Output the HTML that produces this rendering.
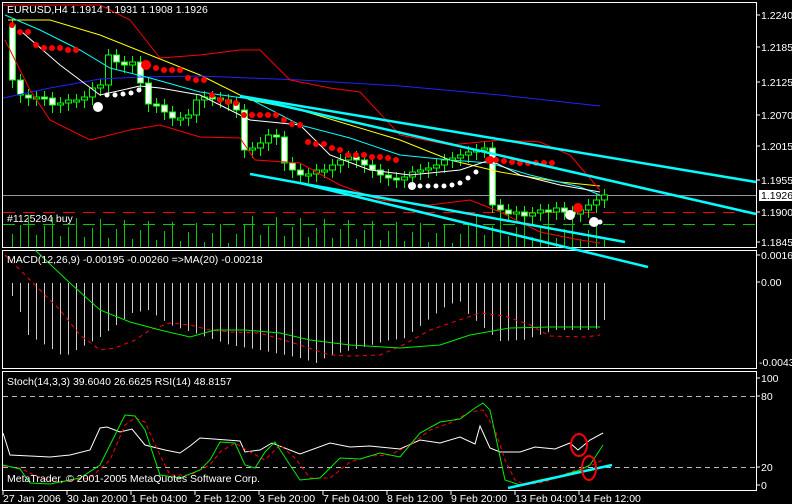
<!DOCTYPE html>
<html><head><meta charset="utf-8"><style>
html,body{margin:0;padding:0;background:#000;width:792px;height:504px;overflow:hidden}
svg{display:block}
text{font-family:"Liberation Sans",sans-serif;font-size:10.5px;fill:#fff}
</style></head><body>
<svg id="s" width="792" height="504" viewBox="0 0 792 504" xmlns="http://www.w3.org/2000/svg">
<rect width="792" height="504" fill="#000"/>
<g fill="none" stroke="#fff" stroke-width="1">
<rect x="2.5" y="2.5" width="754" height="245"/>
<rect x="2.5" y="250.5" width="754" height="118"/>
<rect x="2.5" y="371.5" width="754" height="119"/>
</g>
<g>
<text x="761" y="19">1.2240</text>
<text x="761" y="51">1.2185</text>
<text x="761" y="86">1.2125</text>
<text x="761" y="119">1.2070</text>
<text x="761" y="150">1.2015</text>
<text x="761" y="184">1.1955</text>
<rect x="759" y="190" width="33" height="11" fill="#fff"/>
<text x="761" y="199" style="fill:#000">1.1926</text>
<text x="761" y="216">1.1900</text>
<text x="761" y="246">1.1845</text>
<text x="761" y="259">0.00167</text>
<text x="761" y="286">0.00</text>
<text x="759" y="366">-0.0043</text>
<text x="761" y="382">100</text>
<text x="761" y="400">80</text>
<text x="761" y="471">20</text>
<text x="761" y="489">0</text>
</g>
<g stroke="#fff"><path d="M757 15h3M757 47h3M757 82h3M757 115h3M757 146h3M757 180h3M757 212h3M757 242h3M757 255h3M757 282h3M757 378h3M757 396h3M757 467h3M757 485h3"/></g>
<line x1="3" y1="195.5" x2="756" y2="195.5" stroke="#8c96a0"/>
<line x1="3" y1="212.5" x2="756" y2="212.5" stroke="#f00" stroke-dasharray="12,8"/>
<line x1="3" y1="224.5" x2="756" y2="224.5" stroke="#0c0" stroke-dasharray="12,8"/>
<text x="7" y="222">#1125294 buy</text>
<g id="vol" stroke="#0c0"></g>
<g id="candles"></g>
<g fill="none" stroke-width="1">
<polyline stroke="#ff0" points="8,20 50,20 100,35 150,55 200,75 250,100 300,110 350,125 400,140 450,160 500,172 560,182 600,186"/>
<polyline stroke="#22f" points="3,98 50,88 100,79 140,77 200,76 300,80 400,86 500,95 600,106"/>
<polyline stroke="#0ff" points="5,15 40,30 80,50 110,68 150,78 200,92 250,99 300,125 350,138 400,155 450,160 490,163 530,175 580,187 600,195"/>
<polyline stroke="#fff" points="22,32 60,65 80,80 100,95 140,86 160,88 200,95 250,120 300,125 330,155 370,170 410,175 460,170 490,160 520,175 560,185 600,192"/>
<polyline stroke="#f00" points="3,5 100,5 130,20 160,58 200,55 240,50 260,50 290,80 330,88 360,92 400,135 450,145 500,140 540,142 570,155 600,190"/>
<polyline stroke="#f00" points="5,40 30,90 50,120 90,140 130,130 160,125 200,137 240,138 255,160 300,163 340,185 380,200 430,205 470,200 500,212 540,232 580,240 600,243"/>
</g>
<g id="dots"></g>
<g stroke="#0ff" stroke-width="2.5">
<line x1="240" y1="96" x2="756" y2="182"/>
<line x1="240" y1="96" x2="756" y2="214"/>
<line x1="250" y1="174" x2="625" y2="242"/>
<line x1="300" y1="183" x2="648" y2="267"/>
</g>
<text x="7" y="13">EURUSD,H4  1.1914 1.1931 1.1908 1.1926</text>
<g id="hist" stroke="#ccc"></g>
<polyline fill="none" stroke="#f00" stroke-dasharray="4,4" points="5,255 30,280 60,310 80,335 100,350 115,348 135,340 150,330 170,323 190,325 210,330 230,332 260,333 300,345 330,355 350,356 380,355 403,345 430,330 480,313 505,316 530,325 550,336 585,337 600,335"/>
<polyline fill="none" stroke="#0e0" points="35,250 70,283 100,310 130,322 160,330 190,337 215,330 245,330 280,333 310,340 350,345 400,348 440,345 470,335 510,328 550,327 600,327"/>
<text x="7" y="263">MACD(12,26,9) -0.00195 -0.00260 =&gt;MA(20) -0.00218</text>
<line x1="3" y1="396.5" x2="756" y2="396.5" stroke="#bbb" stroke-dasharray="5,4"/>
<line x1="3" y1="467.5" x2="756" y2="467.5" stroke="#bbb" stroke-dasharray="5,4"/>
<text x="7" y="385">Stoch(14,3,3) 39.6040 26.6625  RSI(14) 48.8157</text>
<polyline fill="none" stroke="#fff" points="3,433 10,455 30,456 50,457 70,455 90,450 100,428 107,427 120,432 132,429 145,445 165,450 180,453 190,446 200,438 240,441 245,452 260,450 272,443 300,454 330,443 350,447 370,446 400,449 420,440 440,443 460,437 475,444 480,426 490,448 500,452 520,452 535,447 555,449 570,443 578,450 590,440 603,433"/>
<polyline fill="none" stroke="#f00" stroke-dasharray="4,3" points="3,466 20,468 40,478 60,482 90,478 110,460 125,425 135,418 145,422 160,455 170,475 190,475 210,465 220,452 235,443 250,452 265,460 280,445 295,458 310,478 330,478 350,462 370,456 390,455 410,445 430,430 450,423 470,412 483,410 495,430 505,460 515,480 525,485 545,482 570,472 590,466 603,460"/>
<polyline fill="none" stroke="#0e0" points="3,465 20,469 30,483 50,484 80,478 100,465 115,435 125,415 135,416 145,430 160,475 180,478 200,470 210,460 220,442 235,443 245,465 255,468 265,452 275,442 290,465 300,480 320,478 340,458 360,459 380,453 400,457 420,433 440,422 460,419 475,408 483,403 490,410 505,480 520,485 540,480 560,476 580,470 590,465 603,445"/>
<line x1="508" y1="488" x2="612" y2="465" stroke="#0ff" stroke-width="2.5"/>
<ellipse cx="579" cy="445" rx="8" ry="11" fill="none" stroke="#f00" stroke-width="2"/>
<ellipse cx="589" cy="468" rx="7" ry="12" fill="none" stroke="#f00" stroke-width="2"/>
<text x="7" y="482">MetaTrader, © 2001-2005 MetaQuotes Software Corp.</text>
<g stroke="#fff"><path d="M3 491v4M67 491v4M131 491v4M195 491v4M259 491v4M323 491v4M387 491v4M451 491v4M515 491v4M579 491v4"/></g>
<text x="3" y="502">27 Jan 2006</text>
<text x="67" y="502">30 Jan 20:00</text>
<text x="131" y="502">1 Feb 04:00</text>
<text x="195" y="502">2 Feb 12:00</text>
<text x="259" y="502">3 Feb 20:00</text>
<text x="323" y="502">7 Feb 04:00</text>
<text x="387" y="502">8 Feb 12:00</text>
<text x="451" y="502">9 Feb 20:00</text>
<text x="515" y="502">13 Feb 04:00</text>
<text x="579" y="502">14 Feb 12:00</text>
</svg>
<script>
var NS="http://www.w3.org/2000/svg";
function el(p,t,a){var e=document.createElementNS(NS,t);for(var k in a)e.setAttribute(k,a[k]);document.getElementById(p).appendChild(e);return e;}
var c=[25,80,95,98,97,98,105,103,100,100,97,88,85,55,62,65,62,83,104,105,112,118,118,115,100,97,98,100,103,110,150,148,143,135,137,163,170,175,174,170,170,165,160,157,160,165,170,175,178,180,177,172,170,168,165,160,158,155,152,150,148,205,210,214,212,216,213,210,212,208,212,214,210,205,200,195];
for(var i=1;i<c.length;i++){
 var x=4+i*8,o=c[i-1],cl=c[i],t=Math.min(o,cl),b=Math.max(o,cl),h=Math.max(b-t,2);
 el("candles","line",{x1:x+0.5,x2:x+0.5,y1:t-6,y2:b+8,stroke:"#0f0"});
 el("candles","rect",{x:x-2.5,y:t,width:6,height:h,fill:cl>o?"#fff":"#000",stroke:"#0f0"});
 var vh=4+((i*37)%28);
 el("vol","line",{x1:x+0.5,x2:x+0.5,y1:247,y2:247-vh});
}
var hp=[[12,296],[20,312],[28,335],[52,349],[64,357],[76,350],[100,337],[132,313],[148,310],[170,325],[200,335],[230,345],[260,350],[300,358],[316,363],[330,355],[360,348],[390,340],[403,339],[443,308],[459,300],[467,313],[499,341],[523,340],[555,330],[595,330],[603,320]];
function hv(x){for(var j=1;j<hp.length;j++){if(x<=hp[j][0]){var a=hp[j-1],b=hp[j];return a[1]+(b[1]-a[1])*(x-a[0])/(b[0]-a[0]);}}return 320;}
for(var x=12;x<=604;x+=8){el("hist","line",{x1:x+0.5,x2:x+0.5,y1:283,y2:hv(x)});}
var rd=[[12,25],[20,32],[28,32],[36,45],[44,48],[52,48],[60,48],[68,50],[76,50],[148,65],[156,68],[164,70],[172,70],[180,70],[188,78],[196,80],[204,80],[212,95],[220,100],[228,102],[236,103],[244,115],[252,115],[260,115],[268,115],[276,115],[284,120],[292,124],[300,125],[308,142],[316,144],[324,144],[332,148],[340,150],[348,155],[356,155],[364,155],[372,157],[380,157],[388,158],[396,160],[488,160],[496,160],[504,161],[512,162],[520,163],[528,163],[536,163],[544,163],[552,163]];
rd.forEach(function(p){el("dots","circle",{cx:p[0],cy:p[1],r:3,fill:"#f00"});});
el("dots","circle",{cx:146,cy:65,r:5,fill:"#f00"});
el("dots","circle",{cx:490,cy:160,r:4,fill:"#f00"});
el("dots","circle",{cx:578,cy:208,r:5,fill:"#f00"});
var wd=[[107,95],[115,95],[123,94],[131,93],[139,90],[420,186],[428,186],[436,186],[444,186],[452,185],[460,183],[468,178],[476,172],[600,222]];
wd.forEach(function(p){el("dots","circle",{cx:p[0],cy:p[1],r:2.5,fill:"#fff"});});
el("dots","circle",{cx:98,cy:107,r:5,fill:"#fff"});
el("dots","circle",{cx:412,cy:186,r:4,fill:"#fff"});
el("dots","circle",{cx:570,cy:215,r:5,fill:"#fff"});
el("dots","circle",{cx:594,cy:222,r:5,fill:"#fff"});
</script>
</body></html>
